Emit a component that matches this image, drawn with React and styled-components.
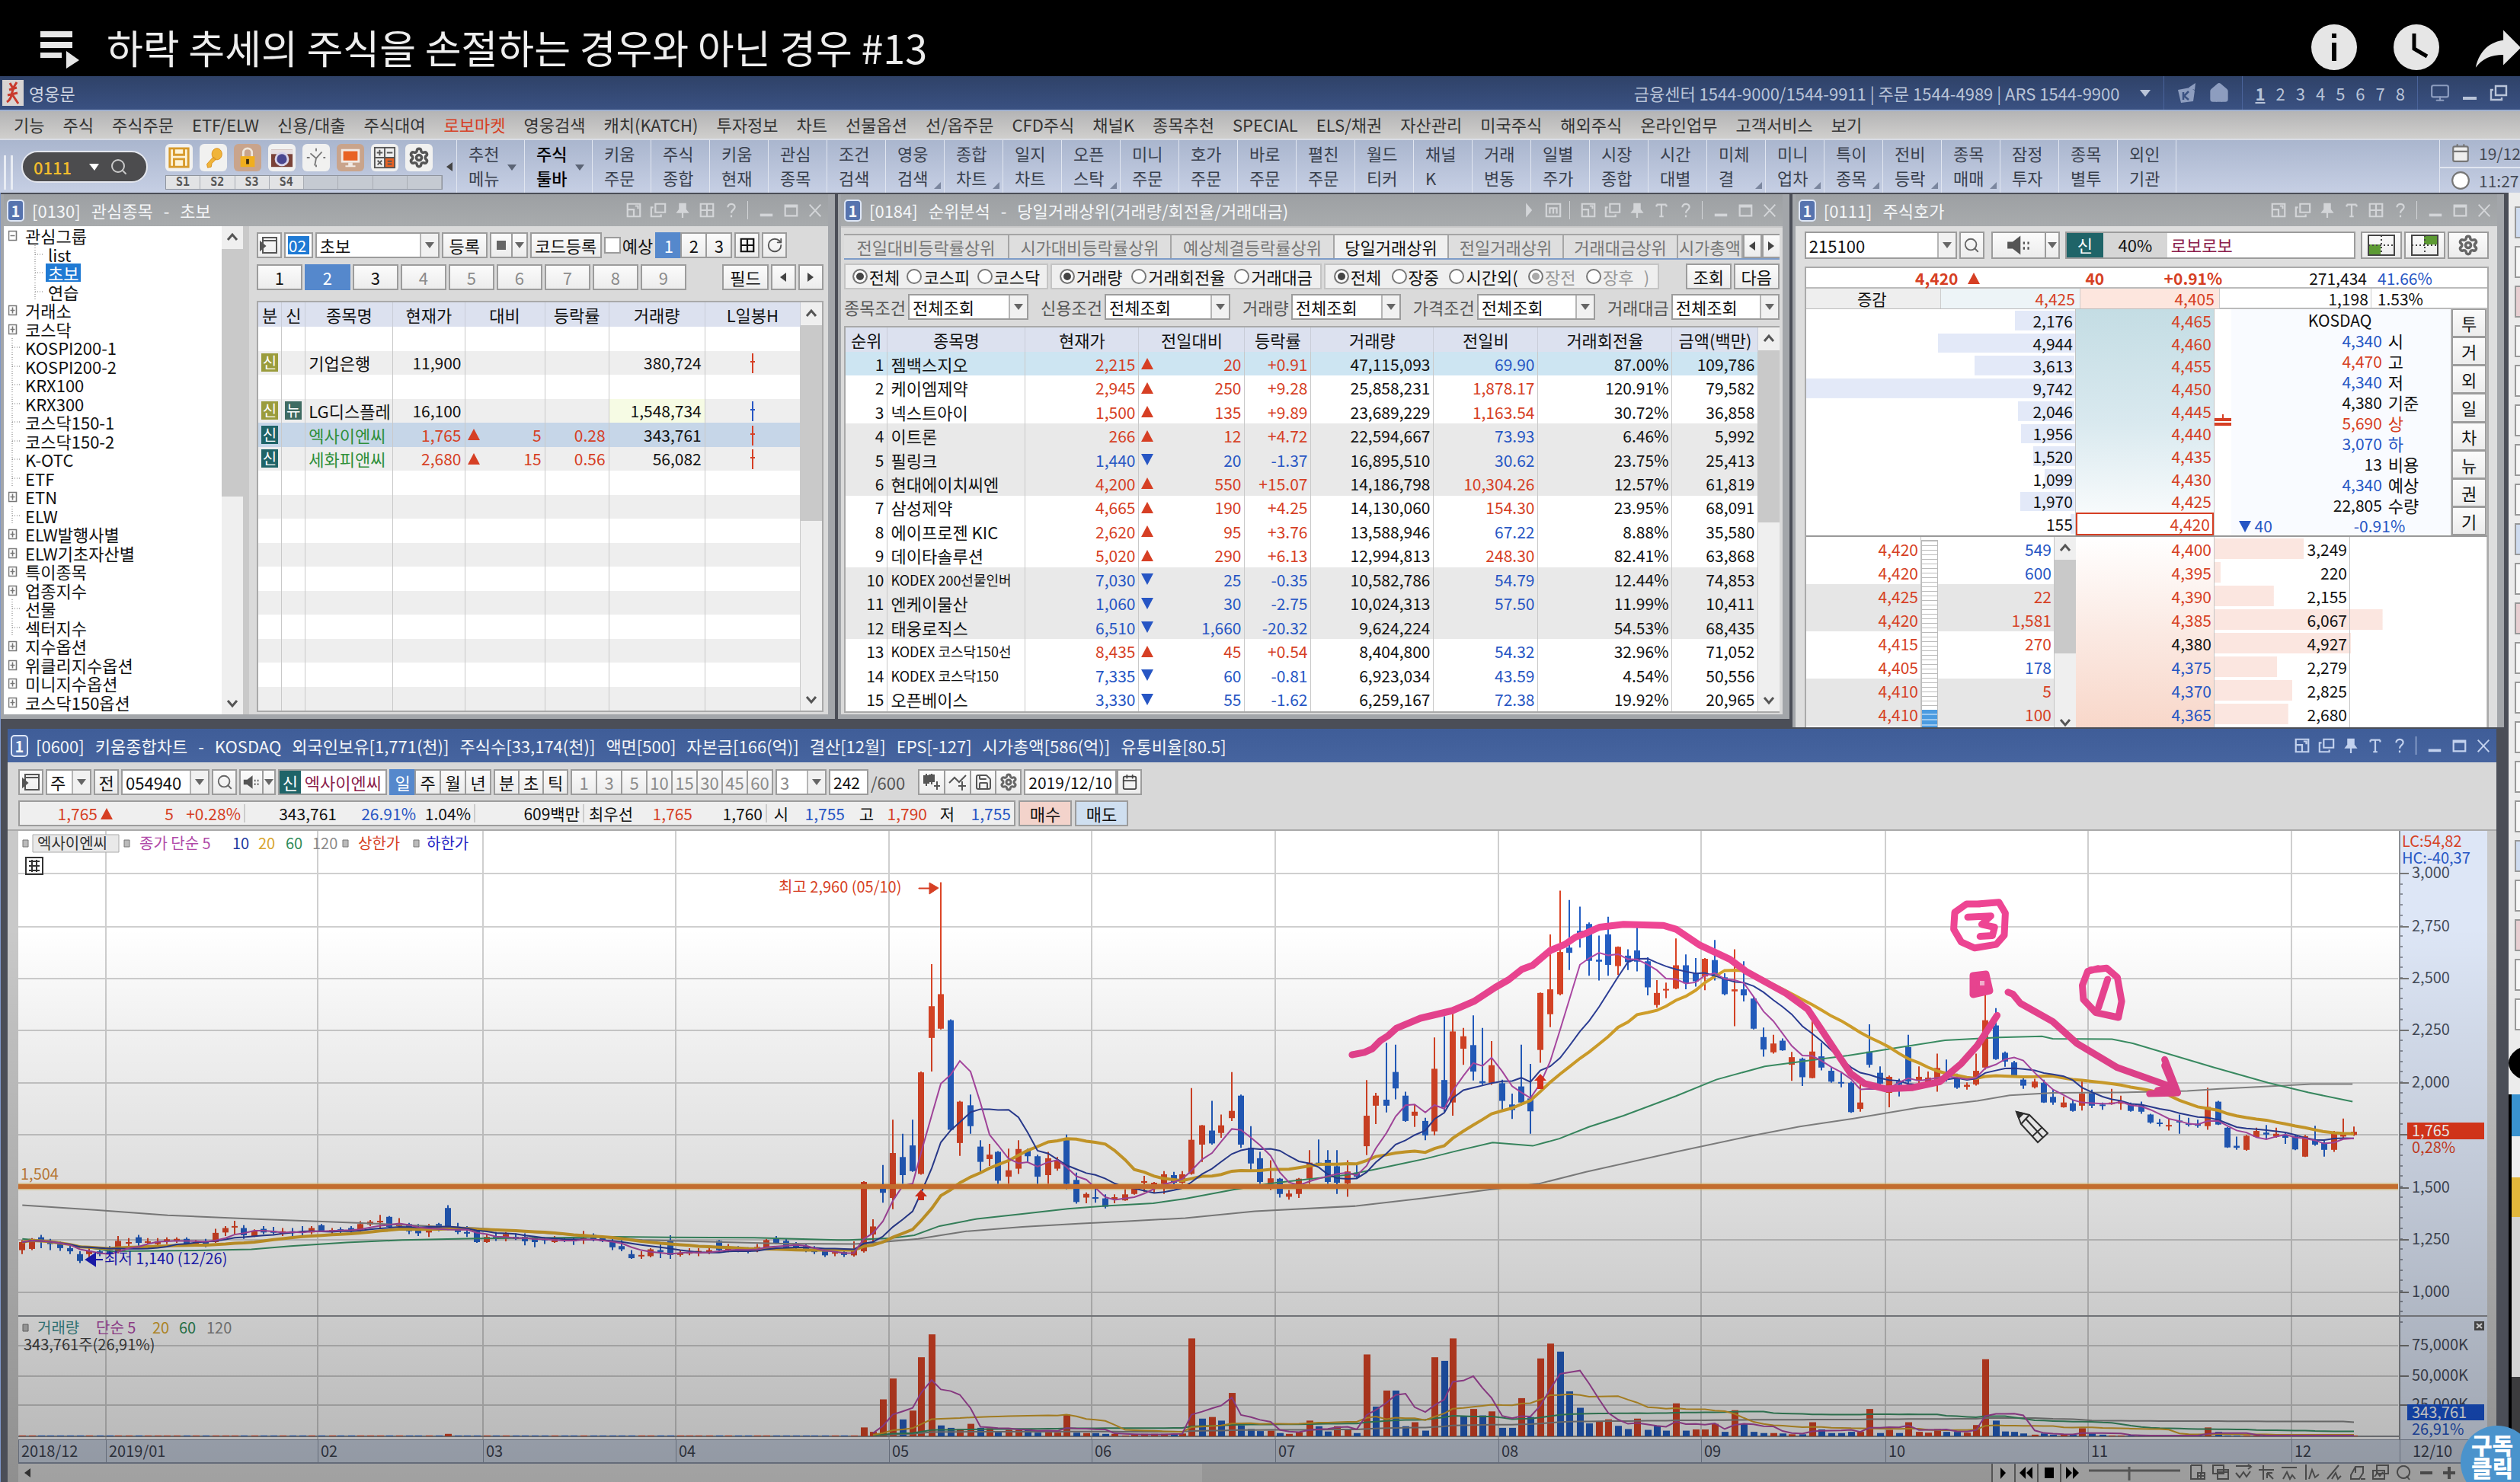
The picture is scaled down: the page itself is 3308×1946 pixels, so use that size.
import React from 'react';
import styled, { createGlobalStyle, css } from 'styled-components';
import { Search, Settings, RotateCw, Save, Monitor, Home, Calendar, Clock } from 'lucide-react';

const RED = '#d63f24';
const BLUE = '#2756c4';
const INK = '#111';
const TEAL = '#1f6468';

const GlobalStyle = createGlobalStyle`
  * {
    box-sizing: border-box;
  }
  body {
    margin: 0;
    background: #4b4e57;
    overflow: hidden;
  }
  body, button, input, select, table {
    font-family: "Noto Sans CJK KR", "Liberation Sans", sans-serif;
    font-size: 22px;
    line-height: 24px;
    color: ${INK};
  }
  button, input, select {
    margin: 0;
    padding: 0;
    border: 0;
    border-radius: 0;
    outline: 0;
  }
  svg {
    display: block;
    flex: none;
  }
`;

/* ---------- page ---------- */

const Page = styled.div`
  position: relative;
  overflow: hidden;
  white-space: nowrap;
`;

const VideoHeader = styled.header`
  display: flex;
  align-items: center;
  height: 100px;
  padding: 24px 0 0 50px;
  background: #000;
  overflow: hidden;
`;

const VideoTitle = styled.h1`
  flex: 1;
  margin: 0 0 0 34px;
  font-size: 52px;
  line-height: 60px;
  font-weight: 400;
  color: #eee;
`;

const VideoActions = styled.div`
  display: flex;
  align-items: center;
  gap: 48px;
  margin-right: -11px;

  button {
    background: none;
  }
  button:last-child {
    margin-left: -10px;
  }
`;

const AppBar = styled.div`
  display: flex;
  align-items: center;
  height: 44px;
  padding-left: 3px;
  color: #b9c4d8;
  background: linear-gradient(#2f4268, #3a5182);
`;

const AppLogo = styled.span`
  width: 28px;
  height: 34px;
  background: #d8d4d2;
`;

const AppName = styled.span`
  flex: 1;
  padding-left: 7px;
  color: #cfd6e2;
`;

const BarGroup = styled.div`
  display: flex;
  align-items: center;
  align-self: stretch;
  gap: ${(p) => p.$gap || 14}px;
  padding: 0 ${(p) => p.$pad || 16}px;
  border-left: 1px solid #4a639a;
`;

const MenuBar = styled.nav`
  display: flex;
  align-items: center;
  gap: 24px;
  height: 38px;
  padding: 0 0 3px 18px;
  background: linear-gradient(#b4b4b5, #d0cfcd);
  border-top: 2px solid #9fb0cf;

  a {
    color: #333;
    text-decoration: none;
  }
  a.hot {
    color: ${RED};
  }
`;

const Toolbar = styled.div`
  display: flex;
  height: 71px;
  border-top: 2px solid #d9dde6;
  background: linear-gradient(#aab6ce, #c6cfe4);
`;

const Grip = styled.div`
  width: 12px;
  margin: 20px 11px 4px 5px;
  border: solid #e8ecf3;
  border-width: 0 3px;
`;

const CodePill = styled.div`
  display: flex;
  align-items: center;
  align-self: center;
  width: 166px;
  height: 42px;
  padding-left: 14px;
  border: 2px solid #e4e7ee;
  border-radius: 21px;
  background: #4c4c4e;
  color: #fff;

  input {
    width: 60px;
    background: none;
    color: #f4bd2c;
    font-weight: 500;
  }
  svg {
    margin-left: 12px;
  }
`;

const QuickTools = styled.div`
  flex: none;
  width: 364px;
  margin: 5px 0 0 23px;
`;

const QuickRow = styled.div`
  display: flex;
  gap: 9px;
`;

const QuickButton = styled.button`
  display: grid;
  place-items: center;
  width: 36px;
  height: 36px;
  border-radius: 6px;
  background: ${(p) => p.$bg || '#f1f1f0'};
`;

const SlotRow = styled.div`
  display: grid;
  grid-template-columns: repeat(8, 1fr);
  height: 19px;
  margin-top: 5px;
  border: 1px solid #8f949d;

  span {
    border-right: 1px solid #a9adb4;
    background: #c5cad2;
    font: 700 15px/17px "DejaVu Sans Mono", monospace;
    color: #555;
    text-align: center;
  }
  span.on {
    background: #e2e3e5;
  }
`;

const ToolCell = styled.button`
  position: relative;
  flex: none;
  width: ${(p) => (p.$wide ? 89 : 77)}px;
  padding: 0 0 4px 15px;
  border-left: 1px solid #e1e6f0;
  background: none;
  line-height: 32px;
  text-align: left;
  color: ${(p) => (p.$strong ? '#000' : '#39404d')};
  font-weight: ${(p) => (p.$strong ? 500 : 400)};
  white-space: pre;

  &::after {
    content: "";
    display: ${(p) => (p.$mark ? 'block' : 'none')};
    position: absolute;
    right: 4px;
    bottom: 5px;
    border: solid transparent;
    border-width: 0 0 9px 9px;
    border-bottom-color: #7b869e;
  }
`;

const DropMark = styled.i`
  position: absolute;
  right: 10px;
  top: 32px;
  border: solid transparent;
  border-width: 8px 6px 0;
  border-top-color: #5b6475;
`;

const ClockBox = styled.div`
  display: grid;
  grid-template-rows: 1fr 1fr;
  width: 106px;
  margin-left: auto;
  border-left: 1px solid #e1e6f0;

  div {
    display: flex;
    align-items: center;
    gap: 11px;
    padding-left: 14px;
    overflow: hidden;
    color: #444a55;
    font-size: 21px;
  }
  div + div {
    border-top: 2px solid #e1e6f0;
  }
`;

const Desk = styled.main`
  display: flex;
  background: #4b4e57;
`;

const Windows = styled.div`
  flex: 1;
  min-width: 0;
  border-left: 1px solid #7d96c8;
`;

const PanelRow = styled.div`
  display: grid;
  grid-template-columns: 1096fr 1250fr 935fr;
  gap: 4px;
  align-items: start;
  padding: 2px 6px 0 0;
`;

/* ---------- window chrome ---------- */

const Panel = styled.section`
  padding: 0 9px ${(p) => (p.$cut ? 0 : 6)}px 4px;
  min-width: 0;
  overflow: hidden;
  background: #a3a6aa;
`;

const TitleBar = styled.div`
  display: flex;
  align-items: center;
  height: ${(p) => (p.$active ? 44 : 42)}px;
  padding: 0 6px 0 4px;
  background: ${(p) => (p.$active ? 'linear-gradient(#3f5d98, #46649f)' : 'linear-gradient(#9da0a3, #a8abad)')};
  color: #f4f6f8;
`;

const Badge = styled.b`
  flex: none;
  width: 23px;
  height: 29px;
  margin-right: 10px;
  border: 2px solid #dde6f6;
  border-radius: 5px;
  background: #5673ae;
  font-size: 20px;
  line-height: 25px;
  text-align: center;
`;

const TitleText = styled.h2`
  flex: 1;
  display: flex;
  gap: 14px;
  margin: 0;
  font-size: 22px;
  font-weight: 400;
`;

const TitleTools = styled.div`
  display: flex;
  align-items: center;
  gap: 10px;
  color: ${(p) => (p.$active ? '#c3d2ee' : '#d3d5d8')};
`;

const glyphs = {
  dock: <path d="M3 3h18v18H3zM3 11h9v10M14 6h4v4" />,
  copy: <path d="M8 3h14v12H8zM5 8H2v13h14v-3" />,
  pin: <path d="M8 3h8v8l3 4H5l3-4zM12 15v8" fill="currentColor" />,
  text: <path d="M5 4h14M12 4v17M9 21h6M5 4v3M19 4v3" />,
  grid: <path d="M3 3h18v18H3zM3 12h18M12 3v18" />,
  help: <path d="M7 8c0-7 11-6 10 0c0 3-5 4-5 8M12 19v3" />,
  memo: <path d="M2 3h20v18H2zM7 17V9h10v8M12 9v8" />,
  play: <path d="M9 5l6 7-6 7z" fill="currentColor" />,
  min: <path d="M3 19h18" strokeWidth="4" />,
  max: <path d="M4 5h17v15H4zM4 7h17" />,
  close: <path d="M4 4l16 17M20 4L4 21" strokeWidth="2" />,
};

const Glyph = ({ name, size = 22 }) => (
  <svg width={size} height={size} viewBox="0 0 24 24" fill="none" stroke="currentColor" strokeWidth="2.4">
    {glyphs[name]}
  </svg>
);

const Bar = styled.span`
  width: 4px;
  height: 24px;
  border-left: 1px solid currentColor;
`;

const WindowTitle = ({ parts, tools, active }) => (
  <TitleBar $active={active}>
    <Badge>1</Badge>
    <TitleText>
      {parts.map((part, i) => (
        <span key={i}>{part}</span>
      ))}
    </TitleText>
    <TitleTools $active={active}>
      {tools.map((name, i) => (name === 'bar' ? <Bar key={i} /> : <Glyph key={i} name={name} />))}
    </TitleTools>
  </TitleBar>
);

/* ---------- controls ---------- */

const box = css`
  border: 2px solid #9c9c9c;
  background: linear-gradient(#fbfbfb, #ececec);
`;

const Row = styled.div`
  display: flex;
  align-items: center;
  gap: ${(p) => p.$gap || 3}px;
  height: ${(p) => p.$h || 34}px;
  margin-top: ${(p) => p.$top || 0}px;
  padding: 0 ${(p) => p.$pad || 0}px;
`;

const Key2 = styled.button`
  ${box}
  display: grid;
  place-items: center;
  flex: none;
  align-self: stretch;
  width: ${(p) => p.$w || 33}px;
  color: ${(p) => (p.$dim ? '#8b8b8b' : '#111')};
  ${(p) => p.$on && 'background: #5588cc; border-color: #5588cc; color: #fff;'}
  ${(p) => p.$bg && `background: ${p.$bg};`}
`;

const Joined = styled.div`
  display: flex;
  align-self: stretch;

  button + button {
    margin-left: -2px;
  }
`;

const Field = styled.input`
  flex: none;
  align-self: stretch;
  width: ${(p) => p.$w}px;
  padding: 0 4px;
  border: 2px solid #9c9c9c;
  background: ${(p) => (p.$picked ? '#1f7ad4' : '#fff')};
  box-shadow: inset 0 0 0 3px #fff;
  color: ${(p) => (p.$picked ? '#fff' : INK)};
  font-size: 21px;
`;

const Combo = styled.span`
  display: flex;
  flex: none;
  align-self: stretch;
  width: ${(p) => p.$w}px;
  border: 2px solid #9c9c9c;
  background: #fff;
  color: ${(p) => (p.$dim ? '#8b8b8b' : INK)};

  select {
    flex: 1;
    min-width: 0;
    padding-left: 4px;
    appearance: none;
    background: none;
    color: inherit;
  }
  i {
    display: grid;
    place-items: center;
    width: 24px;
    border-left: 2px solid #b5b5b5;
    background: #f1f1f1;
  }
`;

const Tri = styled.b`
  display: inline-block;
  flex: none;
  border: solid transparent;
  ${(p) => p.$dir === 'up' && 'border-width: 0 8px 15px; border-bottom-color: #d63f24;'}
  ${(p) => p.$dir === 'down' && 'border-width: 15px 8px 0; border-top-color: #2756c4;'}
  ${(p) => p.$dir === 'drop' && 'border-width: 8px 6px 0; border-top-color: #666;'}
  ${(p) => p.$dir === 'left' && 'border-width: 6px 8px 6px 0; border-right-color: #444;'}
  ${(p) => p.$dir === 'right' && 'border-width: 6px 0 6px 8px; border-left-color: #444;'}
`;

const Select = ({ id, w, value, label, dim }) => (
  <Combo $w={w} $dim={dim}>
    <select id={id} aria-label={label} defaultValue={value}>
      <option>{value}</option>
    </select>
    <i>
      <Tri $dir="drop" />
    </i>
  </Combo>
);

const Speaker = ({ size = 28 }) => (
  <svg width={size} height={size} viewBox="0 0 28 28" fill="#555">
    <path d="M1 10h6l9-7v22l-9-7H1zM19 10h2v3h-2zM19 16h2v3h-2zM24 10h2v3h-2zM24 16h2v3h-2z" />
  </svg>
);

const Rail = styled.div`
  display: flex;
  flex-direction: column;
  align-items: center;
  flex: none;
  width: 28px;
  background: #efefef;
  color: #555;

  span {
    flex: 1;
    width: 100%;
  }
  span::before {
    content: "";
    display: block;
    width: 100%;
    height: ${(p) => p.$thumb}%;
    background: #c9c9c9;
  }
`;

const Chevron = ({ down }) => (
  <svg width="16" height="30" viewBox="0 0 16 30" fill="none" stroke="#555" strokeWidth="3">
    <path d={down ? 'M2 12l6 7 6-7' : 'M2 18l6-7 6 7'} />
  </svg>
);

const ScrollRail = ({ thumb }) => (
  <Rail $thumb={thumb}>
    <Chevron />
    <span />
    <Chevron down />
  </Rail>
);

const TableWrap = styled.div`
  display: flex;
  margin-top: ${(p) => p.$top}px;
  border: 2px solid #a9a9a9;
  background: #fff;
`;

const Table = styled.table`
  flex: 1;
  width: 100%;
  height: ${(p) => p.$h}px;
  table-layout: fixed;
  border-collapse: collapse;

  th {
    height: 32px;
    padding: 0;
    background: #dce1ef;
    border-right: 1px solid #c9cdd8;
    font-weight: 400;
  }
  td {
    height: 31px;
    padding: 0 4px 0 3px;
    border-right: 1px solid #c9c9c9;
    overflow: hidden;
    text-align: right;
    font-size: 21px;
  }
  td.name {
    text-align: left;
    font-size: 22px;
    padding: 0 0 0 4px;
  }
  td.long {
    font-size: 18px;
  }
  td.mid {
    padding: 0;
    text-align: center;
  }
`;

const Tr = styled.tr`
  background: ${(p) => p.$bg};
`;

const Tone = styled.span`
  color: ${(p) => p.$c};
`;

const Pair = styled.span`
  display: flex;
  align-items: center;
  justify-content: space-between;
  color: ${(p) => p.$c};
`;

const Tag = styled.b`
  display: block;
  width: 22px;
  height: 24px;
  margin: 0 auto;
  background: ${(p) => p.$bg};
  color: #fff;
  font-size: 20px;
  font-weight: 400;
`;

/* ---------- watch list ---------- */

const WatchBody = styled.div`
  display: flex;
  height: 641px;
  background: #fff;
`;

const Tree = styled.ul`
  flex: 1;
  display: grid;
  grid-auto-rows: 1fr;
  margin: 0;
  padding: 0 0 4px 6px;
  list-style: none;
  overflow: hidden;
`;

const TreeItem = styled.li`
  display: flex;
  align-items: center;
  gap: 6px;
  padding-left: ${(p) => (p.$child ? 30 : 0)}px;

  mark {
    padding: 0 3px;
    margin-left: -3px;
    background: #1f7ad4;
    color: #fff;
  }
`;

const TreeMark = ({ kind }) => (
  <svg width="16" height="24" viewBox="0 0 16 24" fill="none" stroke="#777" strokeWidth="1">
    {kind === 'leaf' ? (
      <path d="M5 0v24M5 12h11" strokeDasharray="1 2" />
    ) : (
      <path d={`M.5 6.5h10v12h-10zM2.5 12.5h6${kind === '+' ? 'M5.5 8.5v8' : ''}`} strokeWidth="1.6" />
    )}
  </svg>
);

const WatchMain = styled.div`
  flex: none;
  width: 71%;
  padding: 8px 6px 3px 10px;
  background: #dadada;
  border-left: 8px solid #c9c9c9;
`;

const CheckLabel = styled.label`
  display: flex;
  align-items: center;
  gap: 2px;

  input {
    appearance: none;
    width: 22px;
    height: 22px;
    border: 2px solid #9c9c9c;
    background: #fff;
  }
`;

const tree = [
  ['-', '관심그룹'],
  ['leaf', 'list', 1],
  ['leaf', '초보', 1, 1],
  ['leaf', '연습', 1],
  ['+', '거래소'],
  ['+', '코스닥'],
  ['leaf', 'KOSPI200-1'],
  ['leaf', 'KOSPI200-2'],
  ['leaf', 'KRX100'],
  ['leaf', 'KRX300'],
  ['leaf', '코스닥150-1'],
  ['leaf', '코스닥150-2'],
  ['leaf', 'K-OTC'],
  ['leaf', 'ETF'],
  ['+', 'ETN'],
  ['leaf', 'ELW'],
  ['+', 'ELW발행사별'],
  ['+', 'ELW기초자산별'],
  ['+', '특이종목'],
  ['+', '업종지수'],
  ['leaf', '선물'],
  ['leaf', '섹터지수'],
  ['+', '지수옵션'],
  ['+', '위클리지수옵션'],
  ['+', '미니지수옵션'],
  ['+', '코스닥150옵션'],
];

const OLIVE = '#9a9c3c';
const watch = [
  null,
  { tag: OLIVE, name: '기업은행', price: '11,900', vol: '380,724', day: RED },
  null,
  { tag: OLIVE, news: true, name: 'LG디스플레', price: '16,100', vol: '1,548,734', day: BLUE, hot: true },
  { tag: TEAL, name: '엑사이엔씨', price: '1,765', diff: '5', rate: '0.28', vol: '343,761', day: RED, up: true, on: true },
  { tag: TEAL, name: '세화피앤씨', price: '2,680', diff: '15', rate: '0.56', vol: '56,082', day: RED, up: true },
  ...Array(10).fill(null),
];

const HotCell = styled.td`
  background: ${(p) => (p.$hot ? '#f6fbe4' : 'none')};
`;

const DaySvg = styled.svg`
  margin: 0 auto;
`;

const DayMark = ({ color }) => (
  <DaySvg width="12" height="28" viewBox="0 0 12 28" stroke={color} strokeWidth="2">
    <path d="M6 2v26M3 13h6" />
  </DaySvg>
);

const PageIcon = () => (
  <svg width="24" height="26" viewBox="0 0 24 26" fill="none" stroke="#555" strokeWidth="2">
    <path d="M4 3h18v20H4zM4 7h18" />
    <path d="M1 9l6 5-6 5z" fill="#555" />
  </svg>
);

const WatchList = () => (
  <Panel>
    <WindowTitle parts={['[0130]', '관심종목', '-', '초보']} tools={['dock', 'copy', 'pin', 'grid', 'help', 'bar', 'min', 'max', 'close']} />
    <WatchBody>
      <Tree>
        {tree.map(([kind, text, child, on]) => (
          <TreeItem key={text} $child={child}>
            <TreeMark kind={kind} />
            {on ? <mark>{text}</mark> : text}
          </TreeItem>
        ))}
      </Tree>
      <ScrollRail thumb={56} />
      <WatchMain>
        <Row>
          <Key2><PageIcon /></Key2>
          <Field $w={38} $picked defaultValue="02" aria-label="그룹 번호" />
          <Select w={163} value="초보" label="관심그룹" />
          <Key2 $w={60}>등록</Key2>
          <Joined>
            <Key2 $w={30}>
              <svg width="12" height="12"><path d="M0 0h12v12H0z" fill="#666" /></svg>
            </Key2>
            <Key2 $w={22}><Tri $dir="drop" /></Key2>
          </Joined>
          <Key2 $w={94}>코드등록</Key2>
          <CheckLabel>
            <input type="checkbox" />예상
          </CheckLabel>
          <Joined>
            <Key2 $w={35} $on>1</Key2>
            <Key2 $w={35}>2</Key2>
            <Key2 $w={35}>3</Key2>
          </Joined>
          <Key2><Glyph name="grid" /></Key2>
          <Key2><RotateCw size={22} color="#555" /></Key2>
        </Row>
        <Row $top={8}>
          {[1, 2, 3, 4, 5, 6, 7, 8, 9].map((n) => (
            <Key2 key={n} $w={60} $on={n === 2} $dim={n > 3}>{n}</Key2>
          ))}
          <Key2 $w={61} style={{ marginLeft: 'auto' }}>필드</Key2>
          <Key2><Tri $dir="left" /></Key2>
          <Key2><Tri $dir="right" /></Key2>
        </Row>
        <TableWrap $top={14}>
          <Table $h={536}>
            <colgroup>
              {[31, 31, 115, 94, 105, 84, 126, 125].map((w, i) => (
                <col key={i} width={w} />
              ))}
            </colgroup>
            <thead>
              <tr>
                {['분', '신', '종목명', '현재가', '대비', '등락률', '거래량', 'L일봉H'].map((h) => (
                  <th key={h}>{h}</th>
                ))}
              </tr>
            </thead>
            <tbody>
              {watch.map((row, i) => {
                const r = row || {};
                const c = r.up ? RED : INK;
                return (
                  <Tr key={i} $bg={r.on ? '#c6d6e8' : i % 2 ? '#eeeeee' : '#fff'}>
                    <td className="mid">{r.tag && <Tag $bg={r.tag}>신</Tag>}</td>
                    <td className="mid">{r.news && <Tag $bg="#3f6b62">뉴</Tag>}</td>
                    <td className="name"><Tone $c={r.up ? '#2f8f3a' : INK}>{r.name}</Tone></td>
                    <td><Tone $c={c}>{r.price}</Tone></td>
                    <td>{r.diff && <Pair $c={c}><Tri $dir="up" />{r.diff}</Pair>}</td>
                    <td><Tone $c={c}>{r.rate}</Tone></td>
                    <HotCell $hot={r.hot}>{r.vol}</HotCell>
                    <td className="mid">{r.day && <DayMark color={r.day} />}</td>
                  </Tr>
                );
              })}
            </tbody>
          </Table>
          <ScrollRail thumb={54} />
        </TableWrap>
      </WatchMain>
    </WatchBody>
  </Panel>
);

/* ---------- ranking ---------- */

const RankBody = styled.div`
  height: 641px;
  padding: 8px 4px 0 4px;
  background: #dadada;
  border-top: 2px solid #c9c9c9;
`;

const Tabs = styled.div`
  display: flex;
  height: 34px;
  border-bottom: 2px solid #7d9cc8;
  overflow: hidden;
`;

const Tab = styled.button`
  flex: none;
  width: ${(p) => p.$w}px;
  border: solid #a5a5a5;
  border-width: 2px 2px 0 0;
  background: ${(p) => (p.$on ? '#f0f0f0' : '#dedede')};
  color: ${(p) => (p.$on ? '#111' : '#777')};
  overflow: hidden;
`;

const RadioGroup = styled.fieldset`
  display: flex;
  align-items: center;
  justify-content: space-around;
  align-self: stretch;
  flex: none;
  width: ${(p) => p.$w}px;
  min-width: 0;
  margin: 0;
  padding: 0 4px;
  border: 2px solid #c4c4c4;
  background: #efefef;
`;

const Radio = styled.label`
  display: flex;
  align-items: center;
  gap: 2px;
  color: ${(p) => (p.$dim ? '#999' : '#111')};

  input {
    appearance: none;
    width: 20px;
    height: 20px;
    border: 2px solid #777;
    border-radius: 50%;
    background: #fff;
  }
  input:checked {
    background: ${(p) => (p.$dim ? '#aaa' : '#444')};
    box-shadow: inset 0 0 0 3px #fff;
  }
`;

const radios = [
  { w: 268, items: ['전체', '코스피', '코스닥'] },
  { w: 356, items: ['거래량', '거래회전율', '거래대금'] },
];

const filters = [
  ['종목조건', 158],
  ['신용조건', 165],
  ['거래량', 144],
  ['가격조건', 155],
  ['거래대금', 142],
];

const rankHead = ['순위', '종목명', '현재가', '전일대비', '등락률', '거래량', '전일비', '거래회전율', '금액(백만)'];

const rank = [
  ['젬백스지오', '2,215', '20', '+0.91', '47,115,093', '69.90', '87.00%', '109,786'],
  ['케이엠제약', '2,945', '250', '+9.28', '25,858,231', '1,878.17', '120.91%', '79,582'],
  ['넥스트아이', '1,500', '135', '+9.89', '23,689,229', '1,163.54', '30.72%', '36,858'],
  ['이트론', '266', '12', '+4.72', '22,594,667', '73.93', '6.46%', '5,992'],
  ['필링크', '1,440', '20', '-1.37', '16,895,510', '30.62', '23.75%', '25,413'],
  ['현대에이치씨엔', '4,200', '550', '+15.07', '14,186,798', '10,304.26', '12.57%', '61,819'],
  ['삼성제약', '4,665', '190', '+4.25', '14,130,060', '154.30', '23.95%', '68,091'],
  ['에이프로젠 KIC', '2,620', '95', '+3.76', '13,588,946', '67.22', '8.88%', '35,580'],
  ['데이타솔루션', '5,020', '290', '+6.13', '12,994,813', '248.30', '82.41%', '63,868'],
  ['KODEX 200선물인버', '7,030', '25', '-0.35', '10,582,786', '54.79', '12.44%', '74,853'],
  ['엔케이물산', '1,060', '30', '-2.75', '10,024,313', '57.50', '11.99%', '10,411'],
  ['태웅로직스', '6,510', '1,660', '-20.32', '9,624,224', '', '54.53%', '68,435'],
  ['KODEX 코스닥150선', '8,435', '45', '+0.54', '8,404,800', '54.32', '32.96%', '71,052'],
  ['KODEX 코스닥150', '7,335', '60', '-0.81', '6,923,034', '43.59', '4.54%', '50,556'],
  ['오픈베이스', '3,330', '55', '-1.62', '6,259,167', '72.38', '19.92%', '20,965'],
];

const rankBg = (i) => {
  if (i === 0) return '#cde5f2';
  return Math.floor(i / 3) % 2 ? '#e9e9e9' : '#fff';
};

const Ranking = () => (
  <Panel>
    <WindowTitle
      parts={['[0184]', '순위분석', '-', '당일거래상위(거래량/회전율/거래대금)']}
      tools={['play', 'memo', 'bar', 'dock', 'copy', 'pin', 'text', 'help', 'bar', 'min', 'max', 'close']}
    />
    <RankBody>
      <Tabs>
        <Tab $w={217}>전일대비등락률상위</Tab>
        <Tab $w={213}>시가대비등락률상위</Tab>
        <Tab $w={214}>예상체결등락률상위</Tab>
        <Tab $w={150} $on>당일거래상위</Tab>
        <Tab $w={151}>전일거래상위</Tab>
        <Tab $w={150}>거래대금상위</Tab>
        <Tab $w={85}>시가총액</Tab>
        <Key2 $w={25}><Tri $dir="left" /></Key2>
        <Key2 $w={25}><Tri $dir="right" /></Key2>
      </Tabs>
      <Row $top={5}>
        {radios.map((g, n) => (
          <RadioGroup key={n} $w={g.w}>
            {g.items.map((t, i) => (
              <Radio key={t}>
                <input type="radio" name={`rank-${n}`} defaultChecked={i === 0} />
                {t}
              </Radio>
            ))}
          </RadioGroup>
        ))}
        <RadioGroup $w={440}>
          <Radio><input type="radio" name="session" defaultChecked />전체</Radio>
          <Radio><input type="radio" name="session" />장중</Radio>
          <Radio><input type="radio" name="session" />시간외(</Radio>
          <Radio $dim><input type="radio" name="after" defaultChecked />장전</Radio>
          <Radio $dim><input type="radio" name="after" />장후</Radio>
          <Tone $c="#999">)</Tone>
        </RadioGroup>
        <Key2 $w={60} style={{ marginLeft: 'auto' }}>조회</Key2>
        <Key2 $w={60}>다음</Key2>
      </Row>
      <Row $top={6} style={{ justifyContent: 'space-between' }}>
        {filters.map(([t, w], i) => (
          <Row key={t}>
            <label htmlFor={`filter-${i}`}><Tone $c="#555">{t}</Tone></label>
            <Select id={`filter-${i}`} w={w} value="전체조회" />
          </Row>
        ))}
      </Row>
      <TableWrap $top={8}>
        <Table $h={504}>
          <colgroup>
            {[55, 181, 149, 139, 87, 161, 137, 176, 113].map((w, i) => (
              <col key={i} width={w} />
            ))}
          </colgroup>
          <thead>
            <tr>
              {rankHead.map((h) => (
                <th key={h}>{h}</th>
              ))}
            </tr>
          </thead>
          <tbody>
            {rank.map(([name, price, diff, rate, vol, ratio, turn, amount], i) => {
              const up = rate[0] === '+';
              const c = up ? RED : BLUE;
              return (
                <Tr key={name} $bg={rankBg(i)}>
                  <td>{i + 1}</td>
                  <td className={name.length > 10 ? 'name long' : 'name'}>{name}</td>
                  <td><Tone $c={c}>{price}</Tone></td>
                  <td><Pair $c={c}><Tri $dir={up ? 'up' : 'down'} />{diff}</Pair></td>
                  <td><Tone $c={c}>{rate}</Tone></td>
                  <td>{vol}</td>
                  <td><Tone $c={parseFloat(ratio.replace(',', '')) > 100 ? RED : BLUE}>{ratio}</Tone></td>
                  <td>{turn}</td>
                  <td>{amount}</td>
                </Tr>
              );
            })}
          </tbody>
        </Table>
        <ScrollRail thumb={51} />
      </TableWrap>
    </RankBody>
  </Panel>
);

/* ---------- order book ---------- */

const BookBody = styled.div`
  height: 658px;
  padding: 7px 11px 0 12px;
  background: #dedede;
  overflow: hidden;
`;

const NameBox = styled.div`
  display: flex;
  align-self: stretch;
  align-items: stretch;
  flex: 1;
  margin: 0 4px;
  border: 2px solid #9c9c9c;
  background: #fff;
  line-height: 30px;

  span {
    padding: 0 5px;
    color: #8b1c4b;
  }
  b {
    width: ${(p) => p.$tagW || 48}px;
    background: ${TEAL};
    color: #fff;
    font-weight: 400;
    text-align: center;
  }
  i {
    width: 84px;
    background: #d6d6d6;
    font-style: normal;
    text-align: center;
  }
`;

const BookSheet = styled.div`
  margin-top: 10px;
  border: 2px solid #aaa;
  border-bottom: 0;
  background: #fff;
  font-size: 21px;
`;

const BookLine = styled.div`
  display: grid;
  grid-template-columns: ${(p) => p.$cols};
  height: 27px;
  line-height: 26px;
  border-bottom: 2px solid #bbb;

  span {
    padding-right: 3px;
    border-right: 1px solid #ccc;
    text-align: right;
  }
  span:last-child {
    padding-left: 8px;
    border: 0;
    text-align: left;
  }
`;

const BigLine = styled(BookLine)`
  font-weight: 700;

  > span {
    padding-right: 6px;
    border: 0;
    color: ${RED};
  }
  > span:nth-child(n + 5) {
    color: ${INK};
    font-weight: 400;
  }
  > span:nth-child(2) {
    padding: 6px 0 0;
    text-align: center;
    line-height: 12px;
  }
  > span:last-child {
    color: ${BLUE};
  }
`;

const Split = styled.div`
  display: grid;
  grid-template-columns: ${(p) => p.$cols};
  height: ${(p) => p.$h}px;
  border-bottom: 2px solid #999;
`;

const Lines = styled.div`
  display: grid;
  grid-auto-rows: ${(p) => (p.$row ? `${p.$row}px` : '1fr')};
  align-items: center;
  text-align: right;
  background: ${(p) => p.$bg || 'none'};
  border-right: 1px solid #c4c4c4;
  overflow: hidden;

  > div {
    padding-right: 3px;
  }
`;

const QtyBar = styled.div`
  height: calc(100% - 4px);
  display: flex;
  align-items: center;
  justify-content: flex-end;
  background: linear-gradient(${(p) => p.$tint}, ${(p) => p.$tint}) no-repeat;
`;

const Quote = styled.div`
  align-self: stretch;
  display: flex;
  align-items: center;
  justify-content: flex-end;
  color: ${(p) => p.$c};
  border: ${(p) => (p.$now ? `2px solid ${RED}` : '0')};
  background: ${(p) => (p.$now ? '#fff' : p.$bg || 'none')};
`;

const InfoLine = styled.div`
  display: grid;
  grid-template-columns: 198px 1fr;
  gap: 8px;
  color: ${(p) => p.$c || INK};
  text-align: right;

  span:last-child {
    color: ${(p) => p.$lc || INK};
    text-align: left;
    font-size: 22px;
  }
`;

const SideTab = styled.button`
  ${box}
  align-self: stretch;
  margin-top: -1px;
`;

const Gauge = styled.div`
  background: repeating-linear-gradient(#bbb 0 1px, #fff 1px 6px);
  border: 1px solid #bbb;
  margin-top: 4px;

  &::after {
    content: "";
    display: block;
    height: 26px;
    margin-top: 222px;
    background: repeating-linear-gradient(#4b9be0 0 5px, #9cc9f0 5px 7px);
  }
`;

const asks = [
  [2176, '4,465'],
  [4944, '4,460'],
  [3613, '4,455'],
  [9742, '4,450'],
  [2046, '4,445'],
  [1956, '4,440'],
  [1520, '4,435'],
  [1099, '4,430'],
  [1970, '4,425'],
  [155, '4,420'],
];

const bids = [
  ['4,400', 3249, RED],
  ['4,395', 220, RED],
  ['4,390', 2155, RED],
  ['4,385', 6067, RED],
  ['4,380', 4927, INK],
  ['4,375', 2279, BLUE],
  ['4,370', 2825, BLUE],
  ['4,365', 2680, BLUE],
];

const trades = [
  ['4,420', '549', BLUE],
  ['4,420', '600', BLUE],
  ['4,425', '22', RED],
  ['4,420', '1,581', RED],
  ['4,415', '270', RED],
  ['4,405', '178', BLUE],
  ['4,410', '5', RED],
  ['4,410', '100', RED],
];

const info = [
  ['4,340', '시', BLUE],
  ['4,470', '고', RED],
  ['4,340', '저', BLUE],
  ['4,380', '기준', INK],
  ['5,690', '상', RED, RED],
  ['3,070', '하', BLUE, BLUE],
  ['13', '비용', INK],
  ['4,340', '예상', BLUE],
  ['22,805', '수량', INK],
];

const tradeBg = (i) => (i % 4 > 1 ? '#e6e6e6' : '#fff');

const CornerIcon = ({ d }) => (
  <svg width="38" height="30" viewBox="0 0 38 30" fill="none" stroke="#444" strokeWidth="2">
    <path d={d} fill="#5c9a33" stroke="none" />
    <path d="M2 2h34v26H2z" />
    <path d="M19 2v26M2 15h34" strokeDasharray="2 3" />
  </svg>
);

const OrderBook = () => (
  <Panel $cut>
    <WindowTitle parts={['[0111]', '주식호가']} tools={['dock', 'copy', 'pin', 'text', 'grid', 'help', 'bar', 'min', 'max', 'close']} />
    <BookBody>
      <Row $h={36}>
        <Select w={200} value="215100" label="종목코드" />
        <Key2><Search size={22} color="#666" /></Key2>
        <Joined style={{ marginLeft: 6 }}>
          <Key2 $w={72}><Speaker size={32} /></Key2>
          <Key2 $w={20}><Tri $dir="drop" /></Key2>
        </Joined>
        <NameBox>
          <b>신</b>
          <i>40%</i>
          <span>로보로보</span>
        </NameBox>
        <Key2 $w={54}><CornerIcon d="M2 14h16v13H2z" /></Key2>
        <Key2 $w={54}><CornerIcon d="M18 2h17v12H18z" /></Key2>
        <Key2 $w={54}><Settings size={28} color="#666" strokeWidth={3} /></Key2>
      </Row>
      <BookSheet>
        <BigLine $cols="207fr 30fr 163fr 156fr 191fr 153fr">
          <span>4,420</span>
          <span><Tri $dir="up" /></span>
          <span>40</span>
          <span>+0.91%</span>
          <span>271,434</span>
          <span>41.66%</span>
        </BigLine>
        <BookLine $cols="178fr 184fr 184fr 200fr 153fr">
          <span style={{ background: '#eee', textAlign: 'center' }}>증감</span>
          <span style={{ background: '#edf4f7' }}><Tone $c={RED}>4,425</Tone></span>
          <span style={{ background: '#fde6de' }}><Tone $c={RED}>4,405</Tone></span>
          <span>1,198</span>
          <span>1.53%</span>
        </BookLine>
        <Split $h={299} $cols="356fr 183fr 22fr 291fr 47fr">
          <Lines>
            {asks.map(([qty, price]) => (
              <QtyBar key={price} $tint="#e3e9f8" style={{ backgroundSize: `${qty / 97}% 100%`, backgroundPosition: 'right' }}>
                {qty.toLocaleString()}
              </QtyBar>
            ))}
          </Lines>
          <Lines $bg="linear-gradient(#c4dde4, #d9e9ef 50%, #fff)">
            {asks.map(([qty, price]) => (
              <Quote key={price} $c={RED} $now={qty === 155}>{price}</Quote>
            ))}
          </Lines>
          <svg width="22" height="297" viewBox="0 0 22 297">
            <path d="M11 138v8" stroke={RED} strokeWidth="2" />
            <path d="M0 143h22v4H0zM0 149h22v4H0z" fill={RED} />
          </svg>
          <Lines $bg="#f9fbff">
            <div style={{ textAlign: 'center' }}>KOSDAQ</div>
            {info.map(([value, text, c, lc]) => (
              <InfoLine key={text} $c={c} $lc={lc}>
                <span>{value}</span>
                <span>{text}</span>
              </InfoLine>
            ))}
            <Pair $c={BLUE} style={{ padding: '0 60px 0 10px' }}>
              <span><Tri $dir="down" /> 40</span>
              <span>-0.91%</span>
            </Pair>
          </Lines>
          <Lines>
            {[...'투거외일차뉴권기'].map((t) => (
              <SideTab key={t}>{t}</SideTab>
            ))}
          </Lines>
        </Split>
        <Split $h={260} $cols="152fr 22fr 154fr 28px 183fr 179fr 181fr">
          <Lines $row={31}>
            {trades.map(([price], i) => (
              <Quote key={i} $c={RED} $bg={tradeBg(i)}>{price}</Quote>
            ))}
          </Lines>
          <Gauge />
          <Lines $row={31}>
            {trades.map(([, qty, c], i) => (
              <Quote key={i} $c={c} $bg={tradeBg(i)}>{qty}</Quote>
            ))}
          </Lines>
          <ScrollRail thumb={62} />
          <Lines $row={31} $bg="linear-gradient(#fff, #fbe9e2 50%, #f8d6c8)">
            {bids.map(([price, , c]) => (
              <Quote key={price} $c={c}>{price}</Quote>
            ))}
          </Lines>
          <Lines $row={31}>
            {bids.map(([price, qty]) => (
              <QtyBar key={price} $tint="#fbe6e0" style={{ backgroundSize: `${Math.min(100, qty / 49)}% 100%` }}>
                {qty.toLocaleString()}
              </QtyBar>
            ))}
          </Lines>
          <Lines $row={31}>
            {bids.map(([price, qty]) => (
              <QtyBar key={price} $tint="#fbe6e0" style={{ backgroundSize: `${Math.max(0, qty / 49 - 100)}% 100%` }} />
            ))}
          </Lines>
        </Split>
      </BookSheet>
    </BookBody>
  </Panel>
);

/* ---------- chart ---------- */

const ChartWindow = styled.section`
  position: relative;
  margin: 2px 16px 0 9px;
  background: #c9c9c9;
`;

const ChartTools = styled.div`
  height: 90px;
  padding: 9px 0 0 14px;
  background: #d8d8d8;
  border-bottom: 2px solid #aaa;
`;

const PriceStrip = styled.div`
  display: flex;
  align-items: center;
  align-self: stretch;
  ${box}
  background: #efefef;
  font-size: 21px;
`;

const StripCell = styled.span`
  width: ${(p) => p.$w}px;
  padding-right: 4px;
  border-right: ${(p) => (p.$rule ? '2px solid #ccc' : '0')};
  color: ${(p) => p.$c || INK};
  text-align: right;
`;

const ChartBody = styled.div`
  padding: 0 12px 0 14px;
  background: #c9c9c9;

  > svg {
    width: 100%;
    height: auto;
  }
`;

const DateAxis = styled.div`
  position: relative;
  height: 32px;
  margin: 0 12px 0 14px;
  border: solid #8b95a8;
  border-width: 1px 0 2px;
  background: #ccd5e4;
  color: #3c4250;
  line-height: 28px;
  font-size: 20px;

  span {
    position: absolute;
    top: 0;
    bottom: 0;
    padding-left: 3px;
    border-left: 1px solid #8b95a8;
  }
`;

const BottomBar = styled.div`
  display: flex;
  align-items: stretch;
  height: 24px;
  margin: 0 12px 0 14px;
  background: #dcdcdc;
`;

const Track = styled.div`
  flex: 1;
  display: flex;
  align-items: center;
  padding-left: 8px;
  background: linear-gradient(90deg, #e2e2e2 60%, #d2d2d2 60%);
`;

const BottomKey = styled.button`
  display: grid;
  place-items: center;
  width: 30px;
  border-left: 2px solid #777;
  background: none;
`;

const BottomEnd = styled.span`
  width: 35px;
`;

const Shade = styled.div`
  position: absolute;
  inset: 134px 0 0 0;
  pointer-events: none;
  background: linear-gradient(rgba(0, 0, 0, 0) 15%, rgba(0, 0, 0, 0.06) 31%, rgba(0, 0, 0, 0.13) 54%, rgba(0, 0, 0, 0.22) 79%, rgba(0, 0, 0, 0.29));
`;

// x, direction, high, body top, body bottom, low, volume top
const winter = `40r965,970,990,1000 57r960,962,987,990 73b952,958,970,985 90b962,968,975,990 108b968,975,985,992 126b978,985,993,1000
143b993,1000,1017,1022 160r985,992,1000,1008 178b985,993,1000,1005 196b980,990,997,1002 212r955,967,995,998 230r960,970,973,985
248b952,958,972,980 265r960,968,970,975 282r960,968,975,982 299r958,963,968,975 317r958,962,968,972 334b958,962,975,980
351r965,970,974,980 368b962,970,974,983 386r937,947,970,972 403r930,935,946,955 420r917,930,933,950 437b928,935,953,962
455r938,943,955,957 472b930,937,946,950 489b932,943,946,950 506r935,943,949,955 524b935,943,947,955 541b930,943,947,955
558r930,935,946,950 575b925,928,942,945 594r935,940,943,955 610b933,938,942,948 628b930,935,942,948 645r918,925,940,943
663r915,919,926,930 680r902,917,921,935 697b905,907,932,935 714r910,925,930,933 732b922,925,943,950 749b925,932,948,955
767r925,930,946,957 785b922,925,940,943 802b878,885,932,940,1448r 819b922,932,945,950 836b930,945,947,957 854b935,942,970,972
871r950,957,970,972 888b945,957,962,967 905r945,950,960,968 923b948,957,962,965 940b948,957,968,978 957b955,958,970,983
975b958,962,965,975 992r955,960,970,972 1010b958,963,967,970 1027b958,964,968,977 1044r942,960,966,975 1062b948,952,965,968
1079b955,957,968,970 1096b960,967,983,990 1112b965,980,988,993 1131b990,1000,1010,1012 1148r993,1002,1005,1012 1164r985,988,1005,1008
1182b975,990,995,1010 1200b953,968,1002,1012 1217r990,998,1002,1006 1234r985,995,998,1003 1251r985,992,998,1005 1269r980,990,995,1000
1287b965,967,990,992 1304r975,982,990,995 1321b980,985,992,995 1339b983,990,994,998 1356r975,982,992,995 1372r962,965,985,987
1390b955,962,972,975 1407b962,967,983,988 1425b970,975,983,988 1442b975,980,992,995 1458b980,990,995,1000 1477b985,990,1003,1007
1494r990,995,998,1005 1511b990,995,1002,1007 1529r968,990,1003,1006`;

const summer = `48r818,820,993,996,1432 66r913,931,951,968,1443 84b778,836,847,872,1362r 103r665,748,860,888,1310 121b700,758,803,825,1412
139b665,729,793,795,1390r 156r545,547,800,802,1257 176r277,382,461,545,1200 193r73,352,438,440,1427b 211b415,417,690,692,1433
228r618,620,723,755,1436 248b602,629,681,700,1423r 266b716,732,770,797,1433 283r725,752,763,780,1434 300b743,745,817,825,1443
320r737,791,807,825,1438 338r716,738,787,800,1438 355b737,741,756,770,1438 373b752,756,807,825,1445 393r745,761,803,825,1439
410r758,766,787,792,1445 428b702,712,825,838,1400r 446b797,815,870,874,1445 465r846,850,859,873,1446 482b837,858,862,872,1446
500b851,861,882,886,1448 518r851,858,863,873,1448 538r838,851,866,867,1452 555r835,837,850,852,1450 573r805,818,822,845,1448
591r820,822,836,848,1448 610r793,801,825,850,1448 628b795,803,822,830,1448 645r793,801,822,825,1447 662r586,715,800,802,1210
682r678,679,727,770,1410b 700b618,692,724,727,1406r 717r652,679,698,710,1415b 737r546,643,661,668,1346 754b602,605,727,735,1427
772b681,735,774,793,1436 790b745,761,820,825,1441 810r766,811,825,840,1440 827b810,812,850,859,1446 844r840,849,857,864,1448
862r810,812,850,860,1444 882r741,772,812,825,1415 899b714,772,776,780,1429 917b741,765,820,825,1442 934b741,781,822,850,1429r
954r766,794,824,857,1437 971b776,797,807,812,1446 989r566,655,731,753,1250 1007r598,605,630,676,1380b 1027b473,615,630,647,1340r
1044b478,546,587,614,1340 1062b595,605,668,670,1429 1079r627,645,655,683,1419 1099b660,668,704,716,1440 1116r460,538,694,704,1257
1134b407,566,634,645,1266 1151r400,445,622,655,1210 1171r436,457,488,528,1403b 1189b405,479,545,567,1386r 1206b436,569,574,578,1402
1223r469,529,573,578,1392 1243b565,574,618,641,1433 1261b600,627,641,663,1433 1278b478,582,622,630,1359r 1296b526,612,644,700,1406
1315r348,349,491,523,1260 1333r203,340,402,434,1223 1351r94,247,352,355,1243b 1369b117,236,249,292,1342 1388b134,194,208,236,1383
1405b173,177,269,306,1422 1424b206,266,271,318,1417r 1441b159,203,279,306,1412r 1460r233,234,282,304,1428b 1478b240,256,272,292,1436
1496b185,243,271,295,1410r 1515b260,270,335,355,1438 1533r317,349,379,386,1428b 1550r323,339,342,362,1440b`;

const autumn = `0r213,280,338,340,1372 19b253,280,325,340,1440 37b262,300,320,333,1437r 54r262,264,308,342,1437 72b217,267,308,318,1423r
91b300,310,352,355,1443 109r240,340,345,432,1389 126b270,340,355,370,1423 144b358,363,438,440,1443 163b435,459,490,508,1446
181r453,475,497,500,1446 198b462,468,492,493,1447 215r496,509,528,568,1449 235b510,513,559,581,1449 253r405,495,561,562,1419
270b473,507,535,542,1437 288b535,543,570,573,1446 307b545,571,574,584,1446 325b570,573,646,648,1443 342r577,622,638,645,1443
359b427,495,528,535,1386r 379b532,548,575,578,1446 396r555,558,598,634,1438 414b563,570,578,607,1446 431b453,484,570,575,1419r
451r532,558,568,575,1443 468r545,560,578,580,1445 486r500,536,578,595,1436 503b515,548,560,570,1443 522b550,560,585,588,1443
540r572,578,583,590,1445 557r500,543,577,580,1426 574r330,417,535,540,1262 594b387,430,514,516,1415 612b495,498,520,533,1442
629b518,522,555,560,1443 646b560,565,580,588,1447 666r563,570,584,587,1450 683b565,573,622,623,1447 701b590,608,622,628,1450
721r607,622,634,635,1450 738b615,624,643,645,1450 755r565,600,630,642,1434 773b590,597,630,636,1447 792b622,627,630,640,1450
810r588,622,626,628 827r605,619,625,640 845b622,626,643,645 864b620,628,645,650 881b650,652,672,675 899b663,672,675,682
915r662,678,681,692 936b652,667,672,700 953b660,674,678,682 970b665,675,680,685 988r585,633,681,690,1432 1008b618,620,677,678,1443
1025b683,685,734,735 1042b707,730,735,740 1060r703,705,740,742 1079r685,693,708,710 1097b678,697,702,712 1115r685,700,707,710
1132b698,703,710,725 1151b703,706,739,741 1169r703,706,757,758 1187b680,715,727,730 1204b717,722,740,757 1223r693,697,740,745
1240r662,697,707,712 1259r682,695,703,705`;

const toY = (v) => 1120 + v / 1.8983;
const seasons = [
  { x0: 0, k: 1.3635, data: winter },
  { x0: 1100, k: 1.4255, data: summer },
  { x0: 2200, k: 1.4152, data: autumn },
];

const candles = seasons.flatMap(({ x0, k, data }) =>
  data.split(/\s+/).map((item) => {
    const [, x, dir, rest, volDir] = item.match(/^(\d+)([rb])([\d,]+)([rb]?)$/);
    const [high, top, bottom, low, vol = 1452] = rest.split(',').map(Number);
    return {
      x: Math.round(x0 + x / k),
      up: dir === 'r',
      volUp: (volDir || dir) === 'r',
      high: toY(high),
      top: toY(top),
      bottom: toY(bottom),
      low: toY(low),
      close: toY(dir === 'r' ? top : bottom),
      vol: toY(vol),
    };
  })
);

const average = (key, span, from = 0) =>
  candles
    .map((c, i) => {
      const part = candles.slice(Math.max(0, i - span + 1), i + 1);
      return `${c.x},${(part.reduce((sum, p) => sum + p[key], 0) / part.length).toFixed(1)}`;
    })
    .slice(from)
    .join(' ');

const line = (season, pts) => {
  const { x0, k } = seasons[season];
  return pts
    .split(' ')
    .map((p) => p.split(',').map(Number))
    .map(([x, y]) => `${(x0 + x / k).toFixed(1)},${toY(y).toFixed(1)}`)
    .join(' ');
};

const ma60 = [
  line(0, '40,962 90,968 150,982 200,993 280,992 350,991 450,988 520,980 620,971 720,965 850,961 1000,959 1100,957 1200,958 1350,959 1500,965'),
  line(1, '20,965 100,960 143,953 190,930 260,912 345,900 430,887 500,880 590,873 650,862 745,838 820,822 950,803 1000,790 1100,762 1160,742 1225,722 1300,730 1350,712 1405,683 1470,655 1550,615'),
  line(2, '0,606 75,565 165,532 250,517 320,505 400,488 500,467 600,460 680,457 700,463 810,464 850,475 900,495 1000,535 1100,573 1175,597 1257,620'),
].join(' ');

const ma120 = [
  line(0, '40,878 170,890 300,903 450,912 640,922 850,935 1000,950 1150,965 1400,974 1529,975'),
  line(1, '66,972 150,962 240,943 345,932 450,924 530,919 650,910 780,893 970,880 1100,860 1225,838 1310,825 1400,795'),
  line(2, '0,745 140,705 230,682 330,662 450,635 560,618 620,604 700,598 830,597 950,593 1010,588 1100,582 1180,576 1257,576'),
].join(' ');

const pens = [
  line(1, '962,503 985,497 1000,488 1015,468 1030,455 1045,437 1090,412 1150,393 1190,370 1230,335 1255,316 1280,290 1300,280 1333,243 1360,228 1380,210 1400,200 1425,185 1470,178 1545,181 1568,190 1613,230 1669,265 1699,295 1774,350 1815,390 1845,450 1870,500 1895,550 1921,575 1961,588 2011,585 2062,570 2102,525 2132,480 2152,440 2169,405'),
  line(2, '560,127 600,123 612,150 610,205 595,228 555,237 530,222 516,190 518,148 540,127 565,127'),
  line(2, '542,160 585,157 568,178 592,185 588,206 565,208'),
  line(2, '770,292 800,287 820,310 828,370 822,410 780,398 757,365 755,330 765,295 785,288'),
  line(2, '802,315 785,385'),
  line(2, '617,347 626,352 640,375 700,420 745,475 820,535 925,585'),
  line(2, '908,515 932,598 880,600'),
  line(2, '908,530 925,585 895,592'),
];

const months = [
  [139, '2019/01'],
  [417, '02'],
  [634, '03'],
  [887, '04'],
  [1167, '05'],
  [1433, '06'],
  [1674, '07'],
  [1967, '08'],
  [2233, '09'],
  [2475, '10'],
  [2741, '11'],
  [3008, '12'],
];

const prices = [
  [1147, '3,000'],
  [1217, '2,750'],
  [1285, '2,500'],
  [1353, '2,250'],
  [1422, '2,000'],
  [1490, ''],
  [1560, '1,500'],
  [1628, '1,250'],
  [1697, '1,000'],
  [1767, '75,000K'],
  [1807, '50,000K'],
  [1845, '25,000K'],
];

const legend = [
  [183, '종가 단순 5', '#b04aa8'],
  [305, '10', '#1c3aa0'],
  [339, '20', '#d8a52c'],
  [375, '60', '#2e8b57'],
  [410, '120', '#8a8a8a'],
  [470, '상한가', RED],
  [560, '하한가', '#2323c4'],
  [49, '엑사이엔씨', '#333'],
];

const volLegend = [
  [49, '거래량', '#3f8f8f'],
  [126, '단순 5', '#b04aa8'],
  [200, '20', '#d8a52c'],
  [235, '60', '#2e8b57'],
  [271, '120', '#8a8a8a'],
];

const minorTicks = Array.from({ length: 44 }, (_, i) => `M3150 ${1147 + Math.round(i * 13.7)}h4`).join('');

const PriceChart = () => (
  <svg viewBox="24 1091 3241 799" fill="none" fontSize="20">
    <path d="M24 1091h3241v799H24z" fill="#fff" />
    <path d="M3150 1091h115v799h-115z" fill="#dde6f6" />
    <g stroke="#cfcfcf" strokeWidth="2">
      {prices.map(([y]) => (
        <path key={y} d={`M24 ${y}H3148`} />
      ))}
      {months.map(([x]) => (
        <path key={x} d={`M${x} 1091V1890`} />
      ))}
    </g>
    <path d="M24 1728h3241M24 1886h3126M3150 1091v799" stroke="#8c8f94" strokeWidth="2" />

    <path d="M24 1558H3148" stroke="#f0c060" strokeWidth="10" opacity=".5" />
    {candles.map((c) => (
      <g key={c.x} fill={c.up ? '#dc4526' : '#245fc4'} stroke={c.up ? '#dc4526' : '#245fc4'}>
        <path d={`M${c.x} ${c.high}V${c.low}`} strokeWidth="2" />
        <rect x={c.x - 4} y={c.top} width="8" height={Math.max(2, c.bottom - c.top)} stroke="none" />
        <rect x={c.x - 4} y={c.vol} width="9" height={1886 - c.vol} stroke="none" fill={c.volUp ? '#dc4526' : '#245fc4'} />
      </g>
    ))}
    <polyline points={ma120} stroke="#8a8a8a" strokeWidth="2" />
    <polyline points={ma60} stroke="#3d9468" strokeWidth="2" />
    <polyline points={average('close', 20)} stroke="#d8a52c" strokeWidth="4" />
    <polyline points={average('close', 10)} stroke="#2c3f9a" strokeWidth="2" />
    <polyline points={average('close', 5)} stroke="#b04aa8" strokeWidth="2" />
    <polyline points={average('vol', 120, 88)} stroke="#8a8a8a" strokeWidth="2" />
    <polyline points={average('vol', 60, 88)} stroke="#3d9468" strokeWidth="2" />
    <polyline points={average('vol', 20, 88)} stroke="#d8a52c" strokeWidth="2" />
    <polyline points={average('vol', 5, 88)} stroke="#b04aa8" strokeWidth="2" />
    <path d="M24 1558H3148" stroke="#e07d35" strokeWidth="6" />
    <path d="M1209 1562l8 9h-4v5h-8v-5h-4zM2022 1410l8 9h-4v11h-8v-11h-4z" fill="#e8321c" />

    <g stroke="#ee4593" strokeWidth="9" strokeLinecap="round" strokeLinejoin="round">
      {pens.map((p, i) => (
        <polyline key={i} points={p} />
      ))}
      <path d="M2590 1281l17-2 5 22-22 5z" fill="#ee4593" />
    </g>
    <path d="M2599 1288h6v6h-6z" fill="#f7b3d2" />
    <g fill="#fff" stroke="#333" strokeWidth="2">
      <path d="M2647 1460l17 4 24 24-13 12-22-24z" />
      <path d="M2653 1476l11-12M2660 1470l22 24M2668 1492l13-12" />
      <path d="M2647 1460l9 2-6 6z" fill="#333" />
    </g>

    <path d="M43 1096h113v23H43z" fill="#e9e9e9" stroke="#aaa" />
    <path d="M30 1103h7v9h-7zM163 1103h7v9h-7zM450 1103h7v9h-7zM543 1103h7v9h-7zM30 1739h7v9h-7z" fill="#bbb" stroke="#777" />
    {legend.map(([x, t, c]) => (
      <text key={x} x={x} y="1115" fill={c}>{t}</text>
    ))}
    <path d="M34 1126h22v22H34zM38 1131h14M38 1137h14M38 1143h14M42 1129v16M48 1129v16" stroke="#333" strokeWidth="2" />
    {volLegend.map(([x, t, c]) => (
      <text key={x} x={x} y="1751" fill={c}>{t}</text>
    ))}
    <text x="31" y="1773" fill="#444">343,761주(26,91%)</text>
    <text x="1022" y="1172" fill={RED}>최고 2,960 (05/10)</text>
    <path d="M1206 1166h14v-7l12 7-12 8v-7h-14z" fill={RED} stroke={RED} />
    <text x="137" y="1660" fill="#1f1fc8">최저 1,140 (12/26)</text>
    <path d="M135 1654h-12M113 1654l12-8v16z" fill="#1f1fc8" stroke="#1f1fc8" strokeWidth="2" />
    <text x="27" y="1549" fill="#d0873c">1,504</text>

    <path d={minorTicks} stroke="#8a909c" strokeWidth="2" />
    {prices.map(([y, t]) => (
      <g key={y}>
        <path d={`M3150 ${y}h12`} stroke="#777" strokeWidth="2" />
        <text x="3166" y={y + 6} fill="#454c5a">{t}</text>
      </g>
    ))}
    <path d="M3151 1092h114v46h-114z" fill="#dde6f6" />
    <text x="3153" y="1112" fill={RED}>LC:54,82</text>
    <text x="3153" y="1134" fill={BLUE}>HC:-40,37</text>
    <path d="M3160 1474h101v22h-101z" fill="#e8391c" />
    <text x="3166" y="1492" fill="#fff">1,765</text>
    <text x="3166" y="1514" fill={RED}>0,28%</text>
    <path d="M3160 1844h101v21h-101z" fill="#1a56d6" />
    <text x="3166" y="1862" fill="#fff">343,761</text>
    <text x="3166" y="1884" fill={BLUE}>26,91%</text>
    <path d="M3248 1735h13v12h-13z" fill="#555" />
    <path d="M3251 1738l7 6M3258 1738l-7 6" stroke="#fff" strokeWidth="2" />
  </svg>
);

const barIcons = [
  'M3 2h14v12M3 2v18h8M12 12h9v8h-9zM16 12v8M12 16h9',
  'M2 2h14v11H2zM8 8h14v12H8zM8 11h14',
  'M2 3h20M18 1l4 3-4 3M2 12l5 6 5-7 4 6 5-7',
  'M2 8h20M8 2v19M13 12l8 8M13 12v7M13 12h7',
  'M2 5h20M4 20l5-9 4 9 3-5 4 5',
  'M4 1v20M8 20l4-12 4 10 5-4',
  'M2 20L17 2M8 20l5-8 3 8 4-4',
  'M3 15l6-11h10v8l-5 8H3zM9 4v8M16 20h6',
  'M7 2h15v11H7zM2 9h15v11H2zM4 17l4-5 3 4 4-5',
  'M12 3a8 8 0 1 0 .1 0M16 16l4 5',
  'M4 12h16',
  'M4 12h16M12 4v16',
];

const Chart = () => (
  <ChartWindow>
    <WindowTitle
      active
      parts={['[0600]', '키움종합차트', '-', 'KOSDAQ', '외국인보유[1,771(천)]', '주식수[33,174(천)]', '액면[500]', '자본금[166(억)]', '결산[12월]', 'EPS[-127]', '시가총액[586(억)]', '유통비율[80.5]']}
      tools={['dock', 'copy', 'pin', 'text', 'help', 'bar', 'min', 'max', 'close']}
    />
    <ChartTools>
      <Row $gap={3}>
        <Key2><PageIcon /></Key2>
        <Select w={60} value="주" label="주기" />
        <Key2>전</Key2>
        <Select w={116} value="054940" label="종목코드" />
        <Key2><Search size={22} color="#666" /></Key2>
        <Joined>
          <Key2 $w={32}><Speaker size={22} /></Key2>
          <Key2 $w={18}><Tri $dir="drop" /></Key2>
        </Joined>
        <NameBox $tagW={28} style={{ flex: 'none', width: 143, margin: 0 }}>
          <b>신</b>
          <span>엑사이엔씨</span>
        </NameBox>
        <Joined>
          {['일', '주', '월', '년'].map((t, i) => (
            <Key2 key={t} $w={35} $on={i === 0}>{t}</Key2>
          ))}
        </Joined>
        <Joined>
          {['분', '초', '틱'].map((t) => (
            <Key2 key={t} $w={34}>{t}</Key2>
          ))}
        </Joined>
        <Joined>
          {[1, 3, 5, 10, 15, 30, 45, 60].map((t) => (
            <Key2 key={t} $w={35} $dim>{t}</Key2>
          ))}
        </Joined>
        <Select w={67} value="3" label="분봉" dim />
        <Field $w={52} defaultValue="242" aria-label="봉 개수" />
        <Tone $c="#555">/600</Tone>
        <Joined style={{ marginLeft: 14 }}>
          <Key2 $w={36}>
            <svg width="26" height="26" viewBox="0 0 26 26" fill="#555" stroke="#555" strokeWidth="2">
              <path d="M6 2v16M13 2v14M3 5h6v9H3zM10 4h6v8h-6zM20 12v11M16 18h8" />
            </svg>
          </Key2>
          <Key2 $w={36}>
            <svg width="26" height="26" viewBox="0 0 26 26" fill="none" stroke="#555" strokeWidth="2">
              <path d="M2 14l7-7 6 6 9-9M19 12v12M14 18h10" />
            </svg>
          </Key2>
          <Key2 $w={35}><Save size={24} color="#555" /></Key2>
          <Key2 $w={35}><Settings size={24} color="#666" strokeWidth={3} /></Key2>
        </Joined>
        <Joined>
          <Field $w={122} defaultValue="2019/12/10" aria-label="기준일" />
          <Key2><Calendar size={22} color="#444" /></Key2>
        </Joined>
      </Row>
      <Row $gap={4} $top={7}>
        <PriceStrip>
          <StripCell $w={106} $c={RED}>1,765</StripCell>
          <Tri $dir="up" />
          <StripCell $w={84} $c={RED}>5</StripCell>
          <StripCell $w={90} $c={RED} $rule>+0.28%</StripCell>
          <StripCell $w={124}>343,761</StripCell>
          <StripCell $w={104} $c={BLUE}>26.91%</StripCell>
          <StripCell $w={74} $rule>1.04%</StripCell>
          <StripCell $w={143} $rule>609백만</StripCell>
          <StripCell $w={68}>최우선</StripCell>
          <StripCell $w={78} $c={RED}>1,765</StripCell>
          <StripCell $w={94} $rule>1,760</StripCell>
          <StripCell $w={32}>시</StripCell>
          <StripCell $w={74} $c={BLUE}>1,755</StripCell>
          <StripCell $w={38}>고</StripCell>
          <StripCell $w={70} $c={RED}>1,790</StripCell>
          <StripCell $w={36}>저</StripCell>
          <StripCell $w={74} $c={BLUE}>1,755</StripCell>
        </PriceStrip>
        <Key2 $w={70} $bg="#f3d3cb">매수</Key2>
        <Key2 $w={70} $bg="#cfdff0">매도</Key2>
      </Row>
    </ChartTools>
    <ChartBody>
      <PriceChart />
    </ChartBody>
    <DateAxis>
      <span style={{ left: 0 }}>2018/12</span>
      {months.map(([x, t]) => (
        <span key={x} style={{ left: `${((x - 24) / 3241) * 100}%` }}>{t}</span>
      ))}
      <span style={{ left: '96.45%', paddingLeft: 16 }}>12/10</span>
    </DateAxis>
    <BottomBar>
      <Track>
        <Tri $dir="left" />
      </Track>
      {['M7 4l7 7-7 8z', 'M10 3v16l-8-8zM19 3v16l-8-8z', 'M5 4h12v14H5z', 'M3 3l8 8-8 8zM12 3l8 8-8 8z'].map((d) => (
        <BottomKey key={d}>
          <svg width="22" height="22" viewBox="0 0 22 22"><path d={d} /></svg>
        </BottomKey>
      ))}
      <svg width="136" height="24" viewBox="0 0 136 24" fill="none" stroke="#777">
        <path d="M8 9h120" strokeWidth="3" />
        <path d="M61 4v18" strokeWidth="3" />
      </svg>
      {barIcons.map((d, i) => (
        <svg key={d} width="30" height="24" viewBox="-3 0 30 24" fill="none" stroke="#666" strokeWidth={i > 9 ? 4 : 2}>
          <path d={d} />
        </svg>
      ))}
      <BottomEnd />
    </BottomBar>
    <Shade />
  </ChartWindow>
);

/* ---------- right strip ---------- */

const Strip = styled.aside`
  flex: none;
  display: flex;
  flex-direction: column;
  width: 15px;
  overflow: hidden;
  background: #ececec;
`;

const StripButtons = styled.div`
  display: grid;
  grid-auto-rows: 42px;
  gap: 10px;
  height: 1120px;
  padding: 18px 0 0 8px;

  button {
    width: 42px;
    border: 2px solid #999;
    background: #f8f8f8;
  }
  button:nth-child(8n + 3) {
    background: #e8cfd2;
  }
  button:nth-child(8n + 1) {
    background: #cfdcf0;
  }
`;

const Knob = styled.div`
  width: 60px;
  height: 46px;
  margin-bottom: 18px;
  border-radius: 50%;
  background: #000;
`;

const Swatch = styled.div`
  height: ${(p) => p.$h}px;
  border-left: 4px solid #000;
  background: ${(p) => p.$bg};
`;

const Follow = styled.div`
  position: absolute;
  right: -18px;
  bottom: -22px;
  width: 96px;
  height: 96px;
  padding: 9px 0 0 14px;
  border-radius: 50%;
  background: #4a93cc;
  color: #fff;
  font-size: 30px;
  font-weight: 900;
  line-height: 30px;
`;

/* ---------- top bars ---------- */

const quickIcons = [
  <path d="M3 3h26v26H3z M9 3h14v9H9z M9 18h14v11H9z" fill="#fdf3d8" stroke="#d79a2b" strokeWidth="3" />,
  <path d="M21 3a7 8 0 1 0 .1 0zM16 15L7 25l1 5 5-1 1-5 6-6z" fill="#f0b43a" stroke="#d98f1c" strokeWidth="1" />,
  <g>
    <path d="M10 15V9c0-8 12-8 12 0v6" fill="none" stroke="#efe7dc" strokeWidth="3" />
    <path d="M6 14h20v15H6z" fill="#f0ae1e" />
    <path d="M14 18h4v7h-4z" fill="#3b2b10" />
  </g>,
  <g>
    <path d="M1 5h30v24H1z" fill="#7a4238" />
    <path d="M1 5h30v6H1z" fill="#e6dfe0" />
    <circle cx="16" cy="18" r="10" fill="#d8d4ea" />
    <circle cx="16" cy="18" r="7" fill="#4a4790" />
  </g>,
  <path d="M16 3v4M16 26v3M3 16h4M26 16h3M8 10l8 7 8-9M16 17l-2 10" fill="none" stroke="#777" strokeWidth="2" />,
  <g>
    <path d="M3 4h26v19H3z" fill="#f1e9e4" />
    <path d="M6 7h20v13H6z" fill="#e86224" />
    <path d="M13 23h6v4h4v2H9v-2h4z" fill="#f1e9e4" />
  </g>,
  <g>
    <path d="M1 1h30v30H1z" fill="#555" />
    <path d="M3 3h12v12H3zM17 3h12v12H17zM3 17h12v12H3z" fill="#eee" />
    <path d="M17 17h12v12H17z" fill="#e86224" />
    <path d="M5 9h8M9 5v8M19 9h8M6 20l6 6M12 20l-6 6M20 21h6M20 25h6" stroke="#555" strokeWidth="2" />
  </g>,
];

const menus = '기능 주식 주식주문 ETF/ELW 신용/대출 주식대여 로보마켓 영웅검색 캐치(KATCH) 투자정보 차트 선물옵션 선/옵주문 CFD주식 채널K 종목추천 SPECIAL ELS/채권 자산관리 미국주식 해외주식 온라인업무 고객서비스 보기'.split(' ');

const tools = '키움/주문 주식/종합 키움/현재 관심/종목 조건/검색 영웅/검색* 종합/차트* 일지/차트 오픈/스탁* 미니/주문 호가/주문 바로/주문 펼친/주문 월드/티커 채널/K 거래/변동 일별/주가 시장/종합 시간/대별 미체/결* 미니/업차* 특이/종목* 전비/등락* 종목/매매* 잠정/투자 종목/별투 외인/기관'.split(' ');

const App = () => (
  <Page>
    <GlobalStyle />
    <VideoHeader>
      <svg width="56" height="56" viewBox="0 0 56 56" fill="#e6e6e6">
        <path d="M3 7h42v8H3zM3 21h42v8H3zM3 35h28v7H3zM37 33l17 12-17 11z" />
      </svg>
      <VideoTitle>하락 추세의 주식을 손절하는 경우와 아닌 경우 #13</VideoTitle>
      <VideoActions>
        <button aria-label="정보">
          <svg width="60" height="60" viewBox="0 0 60 60">
            <circle cx="30" cy="30" r="30" fill="#e6e6e6" />
            <path d="M27 12h6v6h-6zM27 24h6v24h-6z" />
          </svg>
        </button>
        <button aria-label="나중에 볼 동영상">
          <svg width="60" height="60" viewBox="0 0 60 60" fill="none" stroke="#000" strokeWidth="5">
            <circle cx="30" cy="30" r="30" fill="#e6e6e6" stroke="none" />
            <path d="M27 12v20l17 10" />
          </svg>
        </button>
        <button aria-label="공유">
          <svg width="79" height="79" viewBox="0 0 24 24" fill="#e6e6e6">
            <path d="M14 9V5l7 7-7 7v-4.100C9 14.900 5.500 16.500 3 20 4 15 7 10 14 9z" />
          </svg>
        </button>
      </VideoActions>
    </VideoHeader>

    <AppBar>
      <AppLogo>
        <svg width="28" height="34" viewBox="0 0 28 34" fill="none" stroke="#c93a2c" strokeWidth="3">
          <path d="M10 4l4 7M19 3l-5 8M9 13l10-3M15 10l-3 9M7 20l13-3M13 17c-1 6-4 10-7 12M13 19l8 12" />
        </svg>
      </AppLogo>
      <AppName>영웅문</AppName>
      <span>금융센터 1544-9000/1544-9911 | 주문 1544-4989 | ARS 1544-9900</span>
      <svg width="58" height="14" viewBox="0 0 58 14" fill="#b9c4d8"><path d="M27 3h14l-7 9z" /></svg>
      <BarGroup>
        <svg width="28" height="28" viewBox="0 0 28 28" fill="#8d9dbf">
          <path d="M2 10l16-3 6 4-2 14-16 2zM16 7l9-6-1 9z" />
          <path d="M9 13v10M16 12l-6 6 6 5" stroke="#3a5182" strokeWidth="2.500" fill="none" />
        </svg>
        <Home size={28} color="#8d9dbf" fill="#8d9dbf" />
      </BarGroup>
      <BarGroup $gap={14}>
        {[1, 2, 3, 4, 5, 6, 7, 8].map((n) => (
          <span key={n} style={n === 1 ? { fontWeight: 700, textDecoration: 'underline' } : undefined}>{n}</span>
        ))}
      </BarGroup>
      <BarGroup>
        <Monitor size={26} color="#8d9dbf" />
        <Glyph name="min" size={24} />
        <Glyph name="copy" size={24} />
      </BarGroup>
    </AppBar>

    <MenuBar>
      {menus.map((m) => (
        <a key={m} href="#menu" className={m === '로보마켓' ? 'hot' : undefined}>{m}</a>
      ))}
    </MenuBar>

    <Toolbar>
      <Grip />
      <CodePill>
        <input defaultValue="0111" aria-label="화면번호" />
        <svg width="16" height="12" viewBox="0 0 16 12" fill="#fff"><path d="M1 2h13l-6 9z" /></svg>
        <Search size={24} color="#c9c9c9" />
      </CodePill>
      <QuickTools>
        <QuickRow>
          {quickIcons.map((icon, i) => (
            <QuickButton key={i} $bg={i === 2 || i === 5 ? '#c9a48c' : undefined} aria-label={`빠른 실행 ${i + 1}`}>
              <svg width="30" height="30" viewBox="0 0 32 32">{icon}</svg>
            </QuickButton>
          ))}
          <QuickButton aria-label="설정"><Settings size={28} color="#555" strokeWidth={3} /></QuickButton>
        </QuickRow>
        <SlotRow>
          {['S1', 'S2', 'S3', 'S4', '', '', '', ''].map((s, i) => (
            <span key={i} className={s && 'on'}>{s}</span>
          ))}
        </SlotRow>
      </QuickTools>
      <Row $h={69} $pad={5}><Tri $dir="left" /></Row>
      <ToolCell $wide>{'추천\n메뉴'}<DropMark /></ToolCell>
      <ToolCell $wide $strong>{'주식\n툴바'}<DropMark /></ToolCell>
      {tools.map((t) => (
        <ToolCell key={t} $mark={t.endsWith('*')}>{t.replace('/', '\n').replace('*', '')}</ToolCell>
      ))}
      <Bar style={{ height: 'auto', color: '#e1e6f0' }} />
      <ClockBox>
        <div><Calendar size={26} color="#777" fill="#eee" />19/12</div>
        <div><Clock size={26} color="#777" fill="#fff" />11:27</div>
      </ClockBox>
    </Toolbar>

    <Desk>
      <Windows>
        <PanelRow>
          <WatchList />
          <Ranking />
          <OrderBook />
        </PanelRow>
        <Chart />
      </Windows>
      <Strip>
        <StripButtons>
          {Array.from({ length: 21 }, (_, i) => (
            <button key={i} aria-label={`도구 ${i + 1}`} />
          ))}
        </StripButtons>
        <Knob />
        <Swatch $h={55} $bg="#3a93d0" />
        <Swatch $h={54} $bg="#eee" />
        <Swatch $h={52} $bg="#e2b73c" />
        <Swatch $h={210} $bg="#d4d4d4" />
        <Swatch $h={138} $bg="#3c3c3e" />
      </Strip>
    </Desk>
    <Follow>구독<br />클릭</Follow>
  </Page>
);

export default App;
